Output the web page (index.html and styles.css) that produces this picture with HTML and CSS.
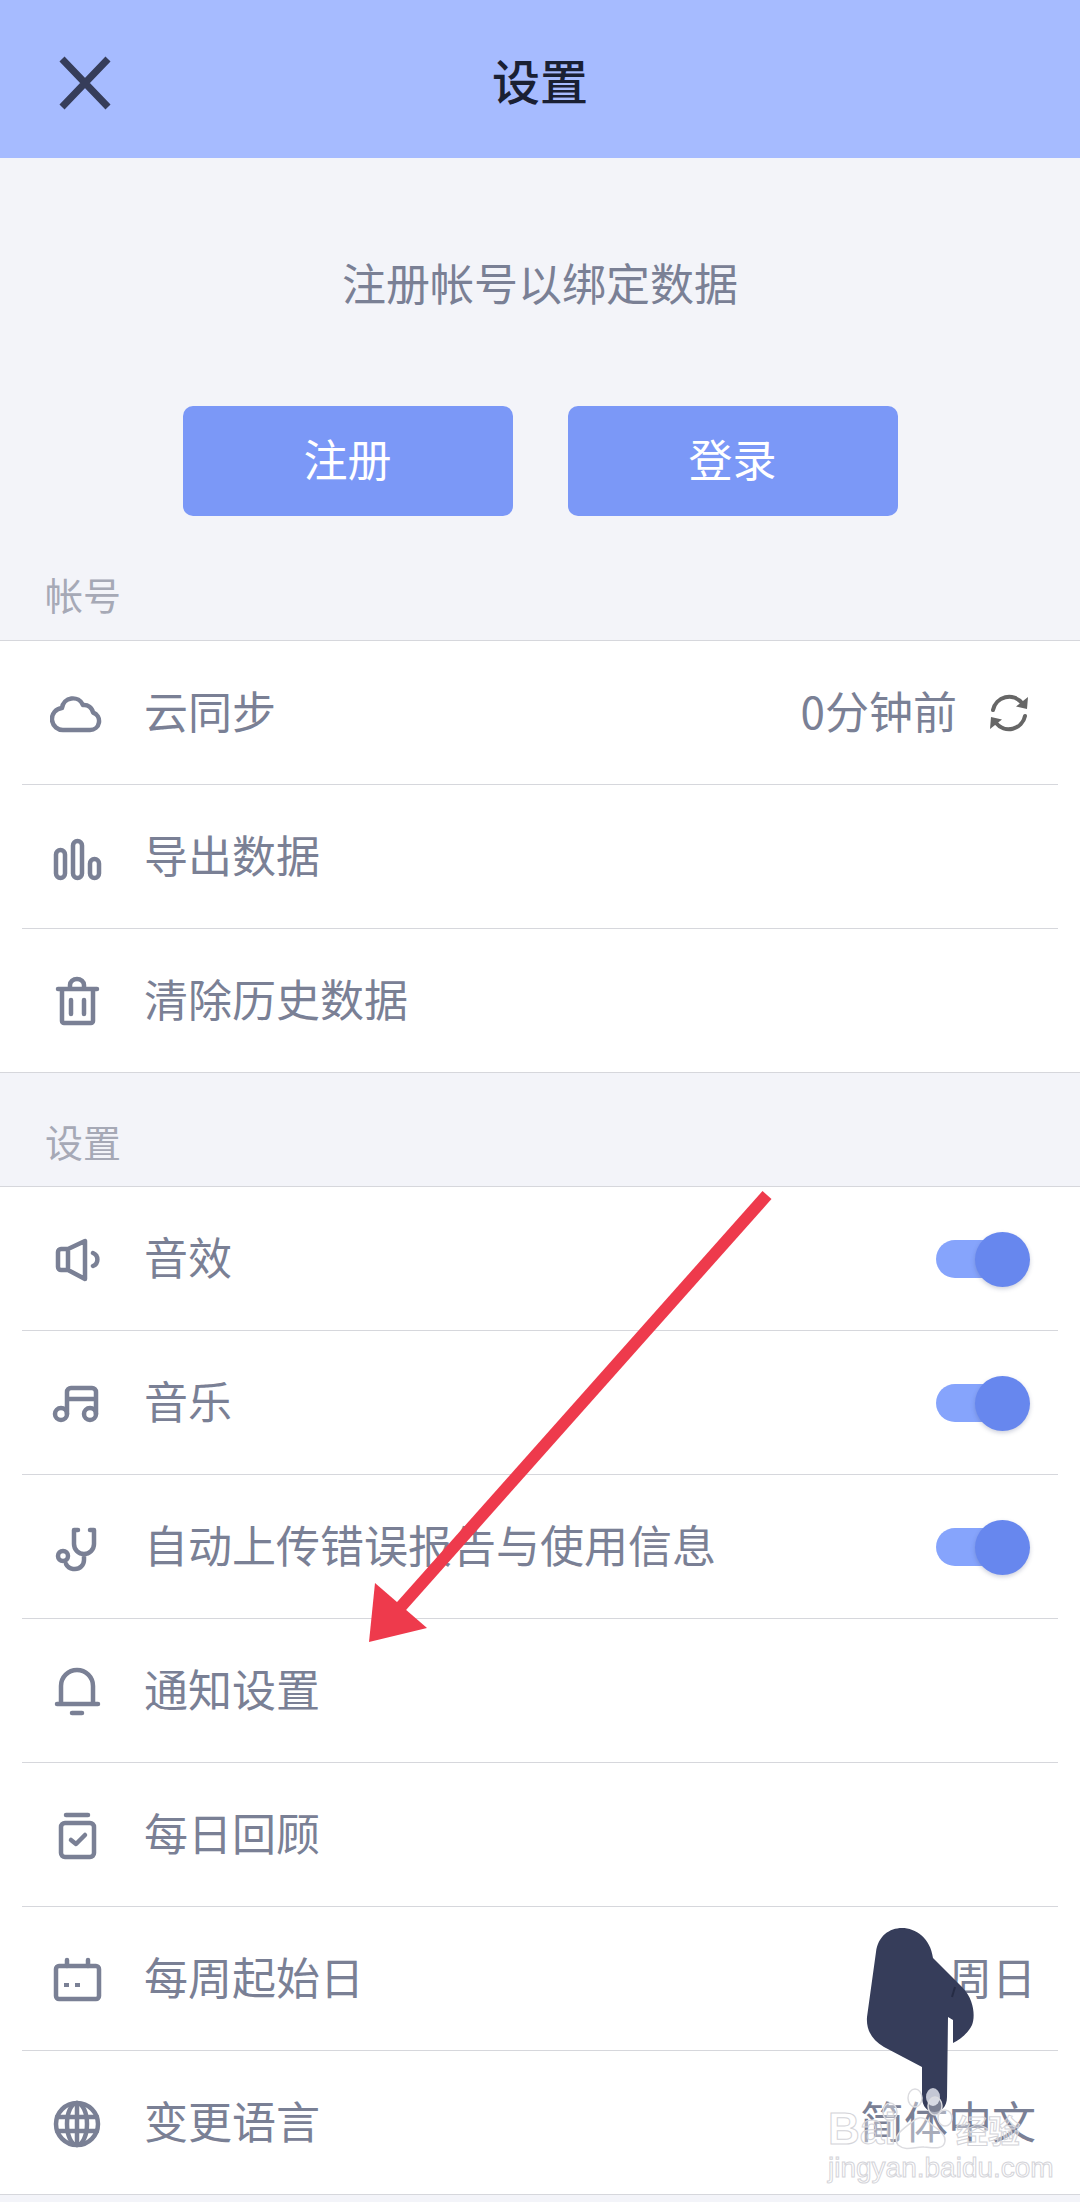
FILE: index.html
```html
<!DOCTYPE html>
<html lang="zh-CN">
<head>
    <meta charset="UTF-8">
    <meta name="viewport" content="width=device-width, initial-scale=1.0">
    <title>设置</title>
    <link rel="stylesheet" href="styles.css">
</head>
<body>
    <div class="page">
        <header class="top-bar">
            <svg class="close-icon" viewBox="0 0 54 54"><path d="M4 3 L50 51 M50 3 L4 51"/></svg>
            <h1>设置</h1>
        </header>

        <section class="intro">
            <p class="intro-text">注册帐号以绑定数据</p>
            <div class="intro-buttons">
                <button>注册</button>
                <button>登录</button>
            </div>
        </section>

        <h3 class="section-label first">帐号</h3>
        <div class="list">
            <div class="row">
                <svg class="icon" viewBox="0 0 54 54"><path d="M14 44 H40 A9 9 0 0 0 43 26.500 A9 9 0 0 0 33 19 A11 11 0 0 0 12 22 A11 11 0 0 0 14 44 Z"/></svg>
                <span class="label">云同步</span>
                <span class="value">0分钟前</span>
                <svg class="sync-icon" viewBox="0 0 38 38"><path d="M3 16 a16.500 16.500 0 0 1 29-7 M35 22 a16.500 16.500 0 0 1-29 7"/><path class="sync-arrow" d="M38 3 L37 15 L26 12.500 Z M0 35 L1 23 L12 25.500 Z"/></svg>
            </div>
            <div class="row">
                <svg class="icon" viewBox="0 0 54 54"><rect x="6" y="20" width="9" height="28" rx="4.500"/><rect x="23" y="11" width="9" height="37" rx="4.500"/><rect x="40" y="29" width="9" height="19" rx="4.500"/></svg>
                <span class="label">导出数据</span>
            </div>
            <div class="row last">
                <svg class="icon" viewBox="0 0 54 54"><path d="M8 15 H47 M20 14 V11 a7 6 0 0 1 14 0 V14 M12 15 V47 a2 2 0 0 0 2 2 H41 a2 2 0 0 0 2-2 V15 M21 26 V40 M34 26 V40"/></svg>
                <span class="label">清除历史数据</span>
            </div>
        </div>

        <h3 class="section-label second">设置</h3>
        <div class="list">
            <div class="row">
                <svg class="icon" viewBox="0 0 54 54"><path d="M18 17 L35 9 V47 L18 38 H11 a3 3 0 0 1-3-3 V20 a3 3 0 0 1 3-3 Z M18 17 V38 M43 21 a7 7 0 0 1 0 13"/></svg>
                <span class="label">音效</span>
                <div class="switch"><div class="knob"></div></div>
            </div>
            <div class="row">
                <svg class="icon" viewBox="0 0 54 54"><circle cx="11" cy="38" r="6"/><circle cx="40" cy="38" r="6"/><path d="M17 38 V16 a4 4 0 0 1 4-4 H42 a4 4 0 0 1 4 4 V38 M17 23 H46"/></svg>
                <span class="label">音乐</span>
                <div class="switch"><div class="knob"></div></div>
            </div>
            <div class="row">
                <svg class="icon" viewBox="0 0 54 54"><path d="M28 10 H24 V24 a10 10 0 0 0 20 0 V10 H40 M34 34 V40 a9 9 0 0 1-9 9 h-2 a9 9 0 0 1-7-5"/><circle cx="13" cy="36" r="5"/></svg>
                <span class="label">自动上传错误报告与使用信息</span>
                <div class="switch"><div class="knob"></div></div>
            </div>
            <div class="row">
                <svg class="icon" viewBox="0 0 54 54"><path d="M11 40 V22 a16 16 0 0 1 32 0 V40 M7 40 H48 M22 49 H32"/></svg>
                <span class="label">通知设置</span>
            </div>
            <div class="row">
                <svg class="icon" viewBox="0 0 54 54"><path d="M16 7 H38"/><rect x="11" y="15" width="33" height="34" rx="4"/><path d="M21 32 L26 36 L35 27"/></svg>
                <span class="label">每日回顾</span>
            </div>
            <div class="row">
                <svg class="icon" viewBox="0 0 54 54"><rect x="6" y="14" width="43" height="33" rx="3"/><path d="M17 8 V14 M38 8 V14"/><path class="icon-dots" d="M14 31 H19 V35 H14 Z M25 31 H30 V35 H25 Z"/></svg>
                <span class="label">每周起始日</span>
                <span class="value">周日</span>
            </div>
            <div class="row">
                <svg class="icon" viewBox="0 0 54 54"><circle cx="27" cy="28" r="21"/><ellipse cx="27" cy="28" rx="10" ry="21"/><path d="M27 7 V49 M7 21 H47 M7 35 H47"/></svg>
                <span class="label">变更语言</span>
                <span class="value">简体中文</span>
            </div>
        </div>

        <!-- annotations drawn on top of the screenshot -->
        <svg class="overlay" viewBox="0 0 1080 2202">
            <path class="arrow-line" d="M767 1195 L398 1610"/>
            <path class="arrow-head" d="M369 1642 L375 1583 L427 1628 Z"/>
            <path class="hand" d="M876 1952 C880 1918 928 1920 933 1958 L962 1987 C975 2000 975 2018 972 2025 C968 2033 960 2040 953 2043 L953 2020 L948 2017 L947 2097 C947 2117 922 2117 922 2097 L922 2067 L884 2047 C872 2040 866 2030 867 2017 Z"/>
            <ellipse class="nail" cx="933" cy="2097" rx="7" ry="9"/>
            <path class="crease" d="M955 1987 L952 1997"/>
            <g class="paw">
                <ellipse cx="915" cy="2098" rx="7" ry="9"/>
                <ellipse cx="935" cy="2106" rx="7" ry="9"/>
                <ellipse cx="890" cy="2112" rx="7" ry="9"/>
                <ellipse cx="945" cy="2118" rx="7" ry="8"/>
                <path d="M912 2122 C902 2130 892 2136 898 2145 C906 2152 916 2146 924 2147 C934 2148 944 2150 945 2141 C946 2132 934 2128 928 2121 C923 2116 917 2117 912 2122 Z"/>
            </g>
        </svg>
        <div class="watermark">
            <div class="wm-top"><span>Bai</span><span>经验</span></div>
            <div class="wm-url">jingyan.baidu.com</div>
        </div>
    </div>
</body>
</html>
```

FILE: styles.css
```css
* {
    box-sizing: border-box;
}
body {
    margin: 0;
    font-family: "Noto Sans CJK SC", "Noto Sans", sans-serif;
    background-color: #f3f4f9;
}
.page {
    position: relative;
    width: 1080px;
    height: 2202px;
    overflow: hidden;
}
.top-bar {
    position: relative;
    height: 158px;
    background: #a6bbff;
    display: flex;
    align-items: center;
    justify-content: center;
}
.top-bar h1 {
    margin: 0;
    font-size: 48px;
    font-weight: 500;
    color: #1a2033;
}
.close-icon {
    position: absolute;
    left: 58px;
    top: 56px;
    width: 54px;
    height: 54px;
    fill: none;
    stroke: #363d5a;
    stroke-width: 7;
}
.intro {
    padding-top: 94px;
}
.intro-text {
    margin: 0;
    line-height: 60px;
    text-align: center;
    font-size: 44px;
    color: #7a8095;
}
.intro-buttons {
    display: flex;
    justify-content: center;
    gap: 55px;
    margin-top: 94px;
}
.intro-buttons button {
    width: 330px;
    height: 110px;
    padding: 0 0 6px;
    border: none;
    border-radius: 10px;
    background: #7b98f7;
    color: #fff;
    font-family: inherit;
    font-size: 44px;
}
.section-label {
    margin: 0;
    padding-left: 45px;
    line-height: 50px;
    font-size: 38px;
    font-weight: 400;
    color: #a6a9b6;
}
.section-label.first {
    margin-top: 53px;
    margin-bottom: 21px;
}
.section-label.second {
    margin-top: 43px;
    margin-bottom: 20px;
}
.list {
    background: #fff;
    border-top: 1px solid #d6d7dc;
    border-bottom: 1px solid #d6d7dc;
}
.row {
    display: flex;
    align-items: center;
    height: 144px;
    margin: 0 22px;
    padding: 0 22px 0 28px;
    border-bottom: 1px solid #d6d7dc;
    color: #7a8095;
    font-size: 44px;
}
.row:last-child {
    height: 143px;
    border-bottom: none;
}
.icon {
    width: 54px;
    height: 54px;
    flex-shrink: 0;
    fill: none;
    stroke: #7a8095;
    stroke-width: 4.500;
    stroke-linecap: round;
    stroke-linejoin: round;
}
.icon-dots {
    fill: #7a8095;
    stroke: none;
}
.label {
    margin-left: 40px;
    margin-bottom: 6px;
    flex: 1;
    white-space: nowrap;
}
.value {
    margin-bottom: 6px;
    white-space: nowrap;
}
.sync-icon {
    width: 38px;
    height: 38px;
    margin-left: 33px;
    margin-right: 8px;
    fill: none;
    stroke: #666;
    stroke-width: 4;
    stroke-linecap: round;
}
.sync-arrow {
    fill: #666;
    stroke: none;
}
.switch {
    position: relative;
    width: 84px;
    height: 38px;
    margin-right: 16px;
    border-radius: 19px;
    background: #86a4fc;
}
.knob {
    position: absolute;
    left: 39px;
    top: -8px;
    width: 55px;
    height: 55px;
    border-radius: 50%;
    background: #6787ee;
    box-shadow: 0 2px 4px rgba(60, 70, 120, 0.25);
}
.overlay {
    position: absolute;
    left: 0;
    top: 0;
    width: 1080px;
    height: 2202px;
}
.arrow-line {
    fill: none;
    stroke: #ee3a4c;
    stroke-width: 12;
}
.arrow-head {
    fill: #ee3a4c;
}
.hand {
    fill: #363d5a;
}
.nail {
    fill: #c4c7d4;
}
.crease {
    fill: none;
    stroke: #262c45;
    stroke-width: 2;
}
.paw {
    fill: rgba(255, 255, 255, 0.35);
    stroke: #dcdce0;
    stroke-width: 1.5;
}
.watermark {
    position: absolute;
    left: 828px;
    top: 2104px;
    width: 200px;
    color: rgba(255, 255, 255, 0.35);
    -webkit-text-stroke: 1px #d4d4d9;
    font-family: "Liberation Sans", sans-serif;
}
.wm-top {
    display: flex;
    justify-content: space-between;
    padding-right: 8px;
    font-size: 44px;
    font-weight: 700;
    line-height: 50px;
}
.wm-top span + span {
    font-family: "Noto Sans CJK SC", sans-serif;
    font-size: 32px;
}
.wm-url {
    font-size: 28px;
    line-height: 28px;
}
```
